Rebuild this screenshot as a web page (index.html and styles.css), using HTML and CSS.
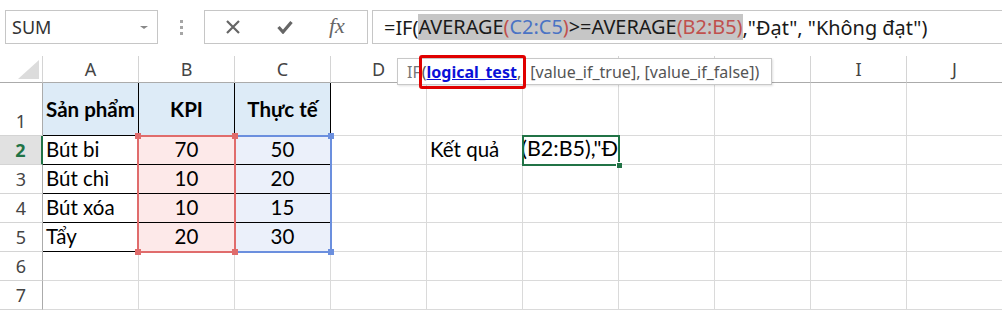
FILE: index.html
```html
<!DOCTYPE html>
<html lang="vi">
<head>
    <meta charset="UTF-8">
    <title>Hàm IF - AVERAGE</title>
    <link rel="stylesheet" href="styles.css">
</head>
<body>

    <!-- Thanh công thức -->
    <div class="toolbar">
        <div class="name-box">
            <span>SUM</span>
            <span class="caret"></span>
        </div>
        <div class="grip"><i></i><i></i><i></i></div>
        <div class="fx-box">
            <svg width="16" height="16" viewBox="0 0 16 16"><path d="M2 2 L14 14 M14 2 L2 14" stroke="#666" stroke-width="2.2" fill="none"/></svg>
            <svg width="16" height="14" viewBox="0 0 16 14"><path d="M1.5 7 L6 12 L14.5 2" stroke="#666" stroke-width="3.2" fill="none"/></svg>
            <span class="fx">fx</span>
        </div>
        <div class="formula">
            <span>=IF(</span><span class="sel">AVERAGE<span class="paren">(</span><span class="ref-c">C2:C5</span><span class="paren">)</span>&gt;=AVERAGE<span class="paren">(</span><span class="ref-b">B2:B5</span><span class="paren">)</span></span><span>,"Đạt", "Không đạt")</span>
        </div>
    </div>

    <!-- Bảng tính -->
    <div class="sheet">
        <div class="corner"><span class="tri"></span></div>
        <div class="col-head">A</div>
        <div class="col-head">B</div>
        <div class="col-head">C</div>
        <div class="col-head">D</div>
        <div class="col-head"></div>
        <div class="col-head"></div>
        <div class="col-head"></div>
        <div class="col-head"></div>
        <div class="col-head">I</div>
        <div class="col-head">J</div>

        <div class="row-head bottom">1</div>
        <div class="cell th">Sản phẩm</div>
        <div class="cell th">KPI</div>
        <div class="cell th">Thực tế</div>
        <div class="cell"></div><div class="cell"></div><div class="cell"></div><div class="cell"></div><div class="cell"></div><div class="cell"></div><div class="cell"></div>

        <div class="row-head active">2</div>
        <div class="cell td">Bút bi</div>
        <div class="cell td num kpi">70</div>
        <div class="cell td num real">50</div>
        <div class="cell"></div>
        <div class="cell">Kết quả</div>
        <div class="cell edit"><span>E(B2:B5),"Đ</span></div>
        <div class="cell"></div><div class="cell"></div><div class="cell"></div><div class="cell"></div>

        <div class="row-head">3</div>
        <div class="cell td">Bút chì</div>
        <div class="cell td num kpi">10</div>
        <div class="cell td num real">20</div>
        <div class="cell"></div><div class="cell"></div><div class="cell"></div><div class="cell"></div><div class="cell"></div><div class="cell"></div><div class="cell"></div>

        <div class="row-head">4</div>
        <div class="cell td">Bút xóa</div>
        <div class="cell td num kpi">10</div>
        <div class="cell td num real">15</div>
        <div class="cell"></div><div class="cell"></div><div class="cell"></div><div class="cell"></div><div class="cell"></div><div class="cell"></div><div class="cell"></div>

        <div class="row-head">5</div>
        <div class="cell td">Tẩy</div>
        <div class="cell td num kpi">20</div>
        <div class="cell td num real">30</div>
        <div class="cell"></div><div class="cell"></div><div class="cell"></div><div class="cell"></div><div class="cell"></div><div class="cell"></div><div class="cell"></div>

        <div class="row-head">6</div>
        <div class="cell"></div><div class="cell"></div><div class="cell"></div><div class="cell"></div><div class="cell"></div><div class="cell"></div><div class="cell"></div><div class="cell"></div><div class="cell"></div><div class="cell"></div>

        <div class="row-head">7</div>
        <div class="cell"></div><div class="cell"></div><div class="cell"></div><div class="cell"></div><div class="cell"></div><div class="cell"></div><div class="cell"></div><div class="cell"></div><div class="cell"></div><div class="cell"></div>

        <!-- Vùng tham chiếu và ô đang chọn (nằm đè lên lưới) -->
        <div class="range range-c"><i class="h tr"></i><i class="h br"></i></div>
        <div class="range range-b"><i class="h tl"></i><i class="h tr"></i><i class="h bl"></i><i class="h br"></i></div>
        <div class="active-cell"><i class="fill-handle"></i></div>
    </div>

    <!-- Gợi ý hàm -->
    <div class="tip">
        <span class="fn">IF</span><span class="arg">(<u>logical_test</u>,</span><span>&nbsp;[value_if_true], [value_if_false])</span>
    </div>

</body>
</html>
```

FILE: styles.css
```css
body {
    margin: 0;
    background: #fff;
    font-family: 'Noto Sans', 'Open Sans', sans-serif;
    color: #222;
    width: 1002px;
    height: 310px;
    overflow: hidden;
    position: relative;
}

/* Thanh công thức */
.toolbar {
    display: flex;
    height: 34px;
    padding: 10px 0 12px 5px;
}
.name-box {
    width: 153px;
    box-sizing: border-box;
    border: 1px solid #c6c6c6;
    display: flex;
    align-items: center;
    justify-content: space-between;
    padding: 0 9px 0 6px;
    font-size: 18px;
    color: #333;
}
.caret {
    width: 0;
    height: 0;
    border-left: 4px solid transparent;
    border-right: 4px solid transparent;
    border-top: 3px solid #888;
}
.grip {
    width: 46px;
    display: flex;
    flex-direction: column;
    align-items: center;
    justify-content: center;
    gap: 3px;
}
.grip i {
    width: 3px;
    height: 3px;
    background: #a6a6a6;
}
.fx-box {
    width: 164px;
    box-sizing: border-box;
    border: 1px solid #c6c6c6;
    display: flex;
    align-items: center;
    padding: 0 0 0 20px;
    gap: 36px;
}
.fx {
    font-family: 'Liberation Serif', serif;
    font-style: italic;
    font-size: 22px;
    color: #666;
    margin-top: -3px;
}
.formula {
    flex: 1;
    margin-left: 4px;
    border: 1px solid #c6c6c6;
    border-right: none;
    display: flex;
    align-items: center;
    padding-left: 11px;
    font-size: 19.9px;
    color: #1a1a1a;
    white-space: nowrap;
}
.formula .sel {
    background: #c6c6c6;
    line-height: 26px;
}
.paren { color: #c0504d; }
.ref-c { color: #4a73c4; }
.ref-b { color: #c0504d; }

/* Bảng tính */
.sheet {
    display: grid;
    grid-template-columns: 43px repeat(10, 96px);
    grid-template-rows: 27px 53px repeat(6, 29px);
    position: relative;
}
.corner {
    border-right: 1px solid #d4d4d4;
    border-bottom: 1px solid #ababab;
    position: relative;
}
.tri {
    position: absolute;
    right: 3px;
    bottom: 3px;
    width: 0;
    height: 0;
    border-left: 21px solid transparent;
    border-bottom: 19px solid #dcdcdc;
}
.col-head {
    border-right: 1px solid #d4d4d4;
    border-bottom: 1px solid #ababab;
    display: flex;
    align-items: center;
    justify-content: center;
    font-size: 18px;
    color: #444;
}
.row-head {
    border-right: 1px solid #ababab;
    border-bottom: 1px solid #d4d4d4;
    display: flex;
    align-items: center;
    justify-content: center;
    font-size: 18px;
    color: #444;
}
.row-head.bottom {
    align-items: flex-end;
    padding-bottom: 2px;
}
.row-head.active {
    background: #e1e1e1;
    color: #217346;
    font-weight: bold;
    border-right: 2px solid #217346;
}
.cell {
    border-right: 1px solid #dadada;
    border-bottom: 1px solid #dadada;
    display: flex;
    align-items: flex-end;
    padding: 0 3px 3px;
    font-family: 'Lato', sans-serif;
    font-size: 20.5px;
    color: #000;
    white-space: nowrap;
    overflow: hidden;
}
.th {
    background: #ddebf7;
    font-weight: bold;
    justify-content: center;
    align-items: center;
    padding: 0;
    border-right: 1px solid #000;
    border-bottom: 1px solid #000;
}
.td {
    border-bottom: 1px solid #000;
    border-right: 1px solid #000;
}
.num { justify-content: center; }
.kpi { background: #fde9e9; }
.real { background: #ebf0fa; }
.edit {
    justify-content: flex-end;
    padding-right: 0;
    font-size: 21.5px;
}

/* Viền vùng tham chiếu */
.range {
    position: absolute;
    border: 2px solid;
    pointer-events: none;
}
.range-b {
    grid-column: 3 / 4;
    grid-row: 3 / 7;
    inset: -1px -1px -1px -2px;
    border-color: #e06c6c;
    z-index: 2;
}
.range-c {
    grid-column: 4 / 5;
    grid-row: 3 / 7;
    inset: -1px -1px -1px -1px;
    border-color: #6b8fde;
    z-index: 1;
}
.h {
    position: absolute;
    width: 6px;
    height: 6px;
}
.range-b .h { background: #e06c6c; }
.range-c .h { background: #6b8fde; }
.h.tl { left: -4px; top: -4px; }
.h.tr { right: -4px; top: -4px; }
.h.bl { left: -4px; bottom: -4px; }
.h.br { right: -4px; bottom: -4px; }

.active-cell {
    position: absolute;
    grid-column: 7 / 8;
    grid-row: 3 / 4;
    inset: -1px;
    border: 2px solid #217346;
    z-index: 3;
}
.fill-handle {
    position: absolute;
    right: -4px;
    bottom: -4px;
    width: 5px;
    height: 5px;
    background: #217346;
    border: 1px solid #fff;
    border-right: none;
    border-bottom: none;
}

/* Gợi ý hàm */
.tip {
    position: absolute;
    left: 397px;
    top: 58px;
    width: 375px;
    height: 27px;
    box-sizing: border-box;
    background: #fff;
    border: 1px solid #c8c8c8;
    box-shadow: 1px 1px 2px rgba(0, 0, 0, 0.12);
    display: flex;
    align-items: center;
    padding-left: 9px;
    font-size: 16px;
    color: #555;
    white-space: nowrap;
    z-index: 10;
}
.tip .fn { color: #777; }
.tip .arg {
    border: 3px solid #e00000;
    border-radius: 3px;
    padding: 3px 2px 3px 0;
    margin: 0 0 0 -2px;
    color: #555;
}
.tip .arg u {
    color: #0a10d8;
    font-weight: bold;
}
```
